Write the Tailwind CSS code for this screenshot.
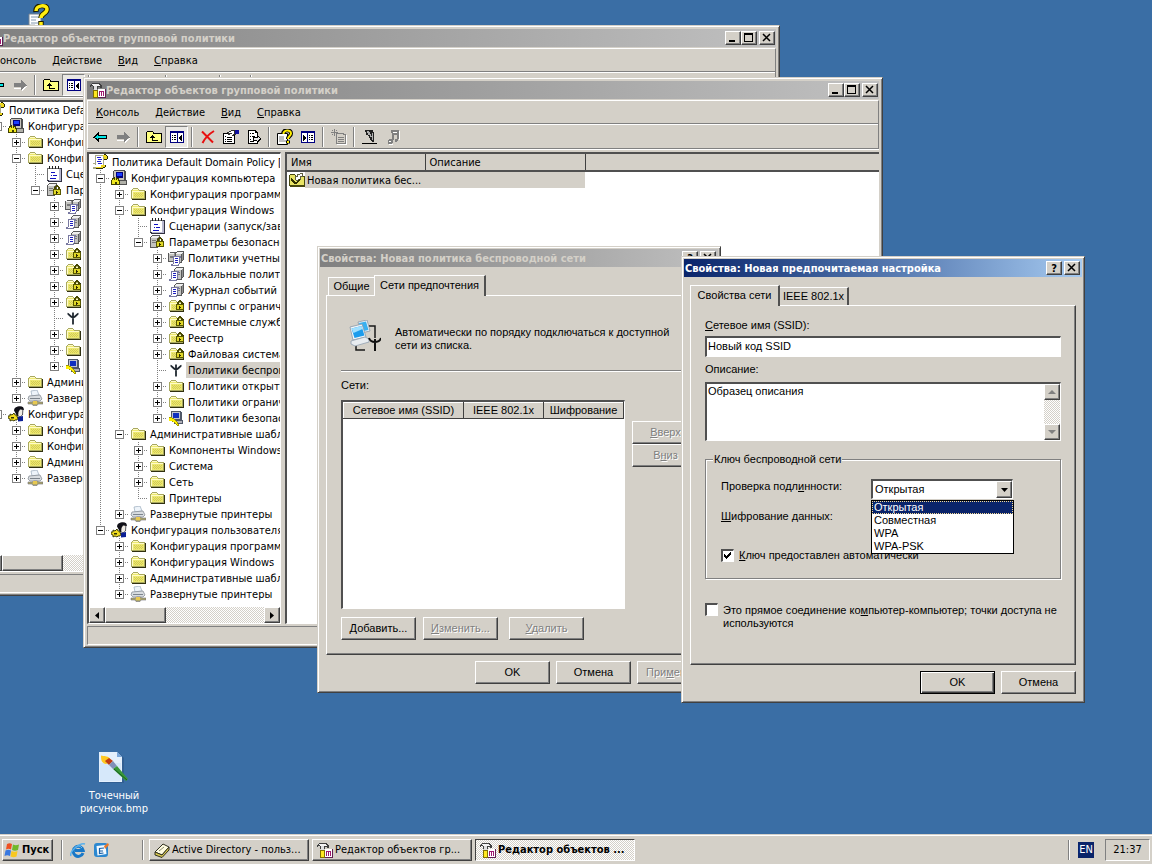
<!DOCTYPE html>
<html lang="ru">
<head>
    <meta charset="utf-8" />
    <meta name="viewport" content="width=device-width, initial-scale=1" />
    <title>Редактор объектов групповой политики</title>
    <script src="https://cdn.jsdelivr.net/npm/@tailwindcss/browser@4"></script>
</head>
<body class="h-screen flex flex-col overflow-hidden bg-[#3a6ea5] text-black text-[11px] leading-[13px] font-['DejaVu_Sans_Condensed','DejaVu_Sans',sans-serif] cursor-default select-none">

    <!-- Иконки -->
    <svg class="hidden" xmlns="http://www.w3.org/2000/svg">
        <symbol id="folder" viewBox="0 0 16 16" shape-rendering="crispEdges">
            <path d="M2 13h13V5h1v9H2z" fill="#303010" />
            <path d="M1 4h1V3h1V2h5v1h1v1h6v9H1z" fill="#a8a860" />
            <path d="M2 4h1V3h5v1h1v1h5v7H2z" fill="#ece870" />
            <path d="M2 5h12v1H3v6H2zM3 3h5v1H3z" fill="#fffbc8" />
            <path d="M4 7h1v1H4zM6 7h1v1H6zM8 7h1v1H8zM10 7h1v1h-1zM12 7h1v1h-1zM5 8h1v1H5zM7 8h1v1H7zM9 8h1v1H9zM11 8h1v1h-1zM4 9h1v1H4zM6 9h1v1H6zM8 9h1v1H8zM10 9h1v1h-1zM12 9h1v1h-1zM5 10h1v1H5zM7 10h1v1H7zM9 10h1v1H9zM11 10h1v1h-1z" fill="#d4cc54" />
        </symbol>
        <symbol id="padlock" viewBox="0 0 8 10" shape-rendering="crispEdges">
            <path d="M1 5V2h1V1h1V0h2v1h1v1h1v3H5V2H3v3z" fill="#484800" />
            <path d="M0 4h8v6H0z" fill="#585800" />
            <path d="M1 5h6v4H1z" fill="#e0d828" />
            <path d="M3 6h1v1h1v1H4v1H3z" fill="#302800" />
        </symbol>
        <symbol id="folderlock" viewBox="0 0 16 16">
            <use href="#folder" width="16" height="16" />
            <use href="#padlock" x="8" y="2" width="8" height="10" />
        </symbol>
        <symbol id="computer" viewBox="0 0 16 16" shape-rendering="crispEdges">
            <path d="M3 0h11v1h1v9h1v5H6v-3H2V1h1z" fill="#505050" />
            <path d="M3 1h10v9H3z" fill="#c8c4bc" />
            <path d="M5 2h7v6H5z" fill="#000080" />
            <path d="M6 3h5v3H6z" fill="#1a3cff" />
            <path d="M9 11h6v3H9z" fill="#b0b0a8" />
            <path d="M0 10h1V8h2V7h1v1h1V7h1v1h2v2h1v5H0z" fill="#404000" />
            <path d="M1 10h1V9h1v1h1V8h1v2h1V9h1v2h1v3H6v-2H4v2H1z" fill="#f0e820" />
        </symbol>
        <symbol id="user" viewBox="0 0 16 16">
            <path d="M8 3C9 0 14 0 15 2L14.500 9L12 11L9 9z" fill="#f0ece4" stroke="#303038" stroke-width=".8" />
            <path d="M6 4.500C6 1 10-.500 15 1L16 4L12 3.500L10.500 6L10 11L8 8z" fill="#101018" />
            <path d="M10 11l5-1v5l-5 .5z" fill="#0a1e96" />
            <path d="M0 10l2 0l0-2l2 1l2-2l1 2l2 0l0 2l1 1l-1 2l-2 0l-1 1l-2-1l-2 1l0-2l-2-1z" fill="#f0dc20" stroke="#303000" stroke-width=".9" />
            <path d="M3 11h3v1.500H3z" fill="#303000" />
        </symbol>
        <symbol id="scroll" viewBox="0 0 16 16" shape-rendering="crispEdges">
            <path d="M3 1h10v2h-1v9h1v2h-3v1H1v-2h2v-3H1V9h2z" fill="#a8a888" />
            <path d="M4 2h7v9h1v2H3v-2h1z" fill="#fff" />
            <path d="M5 3h4v1H5zM6 5h4v1H6zM5 7h4v1H5zM6 9h4v1H6z" fill="#2020d0" />
            <path d="M11 1h3v1h1v3h-3V3h-1zM9 11h4v2h-2v1H4v-1h5z" fill="#f0d820" />
            <path d="M12 0h2v1h1v1h1v3h-1v1h-3V5h3V2h-1V1h-2zM13 11h1v2h-1v1h-2v1H4v-1h7v-1h2z" fill="#282800" />
        </symbol>
        <symbol id="notes" viewBox="0 0 16 16" shape-rendering="crispEdges">
            <path d="M1 2h15v14H2v-1H1z" fill="#303040" />
            <path d="M2 3h11v11H2z" fill="#fff" />
            <path d="M1 2h13v1H1zM1 2h1v12H1z" fill="#707070" />
            <path d="M3 0h1v3H3zM6 0h1v3H6zM9 0h1v3H9zM12 0h1v3h-1z" fill="#202020" />
            <path d="M5 6h4v1H5zM5 9h1v1H5zM7 9h4v1H7zM4 12h6v1H4z" fill="#1010c0" />
            <path d="M13 3h2v12H3v-1h10z" fill="#b8b8d0" />
        </symbol>
        <symbol id="tower" viewBox="0 0 10 14" shape-rendering="crispEdges">
            <path d="M0 3h1V2h1V1h8v10H9v1H8v2H0z" fill="#585858" />
            <path d="M1 3h1V2h7v1H8v1H1z" fill="#f0f0f0" />
            <path d="M1 4h6v9H1z" fill="#c4c4c0" />
            <path d="M8 3h1v8H8z" fill="#909090" />
            <path d="M2 6h4v1H2zM2 8h4v1H2z" fill="#787878" />
        </symbol>
        <symbol id="serverlock" viewBox="0 0 16 16">
            <use href="#tower" x="1" y="0" width="10" height="14" />
            <use href="#padlock" x="7" y="3" width="8" height="10" />
        </symbol>
        <symbol id="sheet" viewBox="0 0 10 10" shape-rendering="crispEdges">
            <path d="M2 0h8v2H9v6H8v2H0V8h2z" fill="#7878a0" />
            <path d="M3 1h5v7H7v1H2V8h1z" fill="#fff" />
            <path d="M4 2h3v1H4zM4 4h3v1H4zM4 6h3v1H4z" fill="#2020c0" />
        </symbol>
        <symbol id="servers" viewBox="0 0 16 16">
            <use href="#tower" x="0" y="1" width="8" height="11" />
            <use href="#tower" x="7" y="0" width="9" height="13" />
            <use href="#sheet" x="3" y="6" width="10" height="10" />
        </symbol>
        <symbol id="serverdoc" viewBox="0 0 16 16">
            <use href="#tower" x="6" y="0" width="10" height="14" />
            <use href="#sheet" x="1" y="5" width="10" height="10" />
        </symbol>
        <symbol id="antenna" viewBox="0 0 16 16">
            <path d="M8 2.500v12M2.500 3.500C4 4 5 7 8 7.500C11 7 12 4 13.500 3.500" fill="none" stroke="#202830" stroke-width="1.800" />
        </symbol>
        <symbol id="secpc" viewBox="0 0 16 16" shape-rendering="crispEdges">
            <path d="M3 1h10v1h1v8h1v4h-9v-3H3z" fill="#505868" />
            <path d="M4 2h8v7H4z" fill="#c0c4d0" />
            <path d="M5 3h6v5H5z" fill="#1030c0" />
            <path d="M8 11h6v2H8z" fill="#b0b0b8" />
            <path d="M1 7h3v1h2v1h1v1h1v1h1v1h1v2h1v2H9v-1H8v-1H7v-1H6v-1H4v-1H1z" fill="#a09800" />
            <path d="M1 8h3v1h2v1h1v1h1v1h1v2h1v1H9v-1H8v-1H7v-1H5v-1H1z" fill="#fff000" />
        </symbol>
        <symbol id="printer" viewBox="0 0 16 16">
            <path d="M4 1l6 -1l2 5l-7 1z" fill="#eef4fa" stroke="#9ab" stroke-width=".7" />
            <path d="M2 6l11-1l2 4l-2 2H3L1 9z" fill="#d8dce0" stroke="#8a9098" stroke-width=".8" />
            <path d="M3 8h10v1H3z" fill="#7c848c" />
            <path d="M1 12h4l2-1h3l2 1h4v2h-5l-1 1.500H6L5 14H1z" fill="#b0a868" stroke="#70707a" stroke-width=".6" />
            <path d="M6 11h4v3H6z" fill="#e8c850" />
        </symbol>
        <symbol id="mmc" viewBox="0 0 16 16" shape-rendering="crispEdges">
            <path d="M0 3h1V2h1V1h8v1h1v1h1v3h-2V5H8v2H3V4H1v1H0z" fill="#404040" />
            <path d="M2 2h7v1h1v1H3V3H2z" fill="#f4f4f4" />
            <path d="M4 4h3v5H4z" fill="#e0e0e0" />
            <path d="M3 8h5v8H3z" fill="#807000" />
            <path d="M4 9h3v6H4z" fill="#ffe820" />
            <path d="M8 7h8v9H8z" fill="#602050" />
            <path d="M8 7h7v8H8z" fill="#fff" />
            <path d="M9 9h5v1H9zM9 10h1v4H9zM11 10h1v4h-1zM13 10h1v4h-1z" fill="#a01870" />
        </symbol>
        <symbol id="back" viewBox="0 0 16 16" shape-rendering="crispEdges">
            <path d="M1 8h1V7h1V6h1V5h1V4h1V3h1v3h8v4H7v3H6v-1H5v-1H4v-1H3V9H1z" fill="#000" />
            <path d="M3 8h1V7h1V6h1v1h8v2H6v1H5V9H3z" fill="#00e8e8" />
        </symbol>
        <symbol id="forward" viewBox="0 0 16 16" shape-rendering="crispEdges">
            <path d="M16 9h-1v1h-1v1h-1v1h-1v1h-1v1h-1v-2H2v-1h9v-1h3V9z" fill="#fff" />
            <path d="M15 8h-1V7h-1V6h-1V5h-1V4h-1V3H9v3H2v4h7v3h1v-1h1v-1h1v-1h1V9h2z" fill="#808080" />
        </symbol>
        <symbol id="up" viewBox="0 0 16 16" shape-rendering="crispEdges">
            <path d="M0 3h1V2h6v1h1v1h8v10H0z" fill="#000" />
            <path d="M1 3h6v2h8v8H1z" fill="#ffff80" />
            <path d="M6 6h1v1h1v1h1v1H7v2h5v1H6V9H4V8h1V7h1z" fill="#000" />
        </symbol>
        <symbol id="treepane" viewBox="0 0 16 16" shape-rendering="crispEdges">
            <path d="M1 2h14v12H1z" fill="#000080" />
            <path d="M2 4h6v9H2zM9 4h5v9H9z" fill="#fff" />
            <path d="M3 6h1v1H3zM5 6h2v1H5zM3 8h1v1H3zM5 8h2v1H5zM3 10h1v1H3zM5 10h2v1H5z" fill="#000" />
            <path d="M10 8h1V7h1V6h1v6h-1v-1h-1v-1h-1z" fill="#000" />
        </symbol>
        <symbol id="rightpane" viewBox="0 0 16 16" shape-rendering="crispEdges">
            <path d="M1 2h14v12H1z" fill="#000080" />
            <path d="M2 4h5v9H2zM8 4h6v9H8z" fill="#fff" />
            <path d="M3 6h1v1h1v1h1v2H5v1H4v1H3z" fill="#000" />
            <path d="M9 6h1v1H9zM11 6h2v1h-2zM9 8h1v1H9zM11 8h2v1h-2zM9 10h1v1H9zM11 10h2v1h-2z" fill="#000" />
        </symbol>
        <symbol id="delete" viewBox="0 0 16 16">
            <path d="M2 2.500L13 13.500M14 2C9 5 5 9 2.500 14" fill="none" stroke="#e81010" stroke-width="2" />
        </symbol>
        <symbol id="props" viewBox="0 0 16 16" shape-rendering="crispEdges">
            <path d="M0 4h12v11H0z" fill="#000" />
            <path d="M1 5h10v9H1z" fill="#fff" />
            <path d="M2 7h1v1H2zM4 8h5v1H4zM2 10h1v1H2zM4 10h5v1H4zM2 12h1v1H2zM4 12h5v1H4z" fill="#000" />
            <path d="M4 3h2V2h2V1h4v1h1v4h-2v1H9V5H7v1H5V4H4z" fill="#303030" />
            <path d="M6 3h2V2h3v3h-1v1H9V4H6z" fill="#fff" />
            <path d="M12 1h4v4h-4z" fill="#1010a0" />
        </symbol>
        <symbol id="export" viewBox="0 0 16 16" shape-rendering="crispEdges">
            <path d="M2 1h8v1h1v1h1v12H2z" fill="#000" />
            <path d="M3 2h6v2h2v10H3z" fill="#fff" />
            <path d="M4 4h1v1H4zM6 4h2v1H6zM4 7h1v1H4zM6 7h3v1H6zM4 10h1v1H4zM4 12h4v1H4z" fill="#000" />
            <path d="M7 8h4V6h1v1h1v1h1v1h1v2h-1v1h-1v1h-1v1h-1v-2H7z" fill="#000" />
            <path d="M8 9h4V8h1v1h1v1h-1v1h-1v1h-1v-1H8z" fill="#e8e8e8" />
        </symbol>
        <symbol id="help" viewBox="0 0 16 16">
            <path d="M.500 4.500h10v11h-10z" fill="#fff" stroke="#000" />
            <path d="M2 8h5M2 10h5M2 12h7" stroke="#808080" />
            <path d="M6 5C6 0 14 0 14 4.500C14 7 11 7 11 10M11 11.500v3" fill="none" stroke="#000" stroke-width="4" />
            <path d="M6.500 5C6 1 14 0 14 4.500C14 7 11 7 11 10M11 12v2" fill="none" stroke="#ffee00" stroke-width="2" />
        </symbol>
        <symbol id="new" viewBox="0 0 16 16" shape-rendering="crispEdges">
            <path d="M5 4h8v1h2v10H5zM6 5v9h8V6h-2V5z" fill="#808080" fill-rule="evenodd" />
            <path d="M7 8h6v1H7zM7 10h6v1H7zM7 12h6v1H7zM3 0h1v7H3zM0 3h7v1H0zM1 1h1v1H1zM5 1h1v1H5zM1 5h1v1H1zM5 5h1v1H5z" fill="#808080" />
            <path d="M15 6h1v10H6v-1h9z" fill="#fff" />
        </symbol>
        <symbol id="activate" viewBox="0 0 16 16" shape-rendering="crispEdges">
            <path d="M3 1h8v2h1v10h-2v-1H9v-1H8V9H7V7H6V6H4V3H3z" fill="#202020" />
            <path d="M5 2h2v1h1v2h1v2h1v1H8V6H6V4H5zM10 4h1v7h-1z" fill="#b0b0b0" />
            <path d="M0 14h15v1H0z" fill="#000" />
        </symbol>
        <symbol id="note" viewBox="0 0 16 16" shape-rendering="crispEdges">
            <path d="M6 1h8v9h-1v2h-1v1h-2v-3h2V6H9v5H8v3H7v1H3v-4h1v-1h3V4H6z" fill="#808080" />
            <path d="M8 3h4v1H8zM4 12h2v1H4zM14 2h1v9h-1zM4 15h4v1H4z" fill="#fff" />
        </symbol>
        <symbol id="policyfolder" viewBox="0 0 16 16" shape-rendering="crispEdges">
            <path d="M0 3h1V2h5v1h1v1h9v11H1v-1H0z" fill="#484810" />
            <path d="M1 3h5v2h9v8H1z" fill="#e8e464" />
            <path d="M6 4h2V2h3V1h3v4h-2v3h-2v1H7V8H6z" fill="#606040" />
            <path d="M7 5h2V3h2V2h2v2h-2v3H9v1H7z" fill="#fff" />
            <path d="M2 6h1v1h1v1h1v1h1v1h2V9h1V8h1V7h1v2h-1v1H9v1H8v1H5v-1H4v-1H3V9H2z" fill="#303000" />
        </symbol>
        <symbol id="network" viewBox="0 0 32 32">
            <path d="M20 6h6v12M7 26v4h9" fill="none" stroke="#181818" stroke-width="1.500" />
            <path d="M9 2l9-2l3 11l-9 2z" fill="#f0f4f8" stroke="#8898a8" stroke-width=".8" />
            <path d="M10 3l7-1.500l2.500 8.500l-7 1.500z" fill="#38b0f0" />
            <path d="M1 7l12-3l4 13l-13 3z" fill="#f4f6f8" stroke="#8898a8" stroke-width=".8" />
            <path d="M2.500 8.500l10-2.500l3 9.500l-10 2.500z" fill="#1c9cec" />
            <path d="M2.500 8.500l10-2.500l1 3l-9 4z" fill="#a0e0ff" />
            <path d="M2 21l14-4l4 2v3l-14 4l-4-2z" fill="#e8ecf0" stroke="#90a0b0" stroke-width=".8" />
            <path d="M26 19v12M20 18c1 3 4 4 6 4s5-1 6-4" fill="none" stroke="#101010" stroke-width="2" />
        </symbol>
        <symbol id="bmp" viewBox="0 0 32 32">
            <path d="M2 2h19l5 5v25H2z" fill="#2a5080" opacity=".5" />
            <path d="M1 1h18l5 5v25H1z" fill="#e4f0fc" />
            <path d="M2 12h21v18H2z" fill="#c8e0f8" opacity=".5" />
            <path d="M19 1v5h5z" fill="#7aa8dc" />
            <path d="M3 5c0 5 1 7 5 8l5-2c0-4-3-6-8-6c-1 0-1-1-2 0z" fill="#ffc820" />
            <path d="M7 10l4-3l4 3l-4 4z" fill="#c03c14" />
            <path d="M11 14l4-4l4 5l-4 3z" fill="#8090b8" />
            <path d="M15 18l4-3l11 13l-2 2z" fill="#389838" />
            <path d="M16 18l13 11" stroke="#186020" fill="none" />
        </symbol>
        <symbol id="winflag" viewBox="0 0 16 16">
            <path d="M3 2c2-1 3-1 5 0L7 7.500C5 6.500 4 6.500 2 7.500z" fill="#f05020" />
            <path d="M9 2.500c2 1 3.500 1 6 0L14 8c-2 1-4 1-6 0z" fill="#70b828" />
            <path d="M1.500 8.500c2-1 3.500-1 5.500 0L6 14c-2-1-3.500-1-5.500 0z" fill="#3878e0" />
            <path d="M7.500 9c2 1 4 1 6 0L12.500 14.500c-2 1-4 1-6 0z" fill="#f8c820" />
        </symbol>
        <symbol id="ie" viewBox="0 0 16 16">
            <path d="M13 11A5 5 0 1 1 13.200 8.500H5" fill="none" stroke="#1878c8" stroke-width="3" />
            <path d="M4.500 6A4.500 4.500 0 0 1 12 6" fill="none" stroke="#70c0f4" stroke-width="1" />
            <path d="M1 14C-1 10 10 0 15 2" fill="none" stroke="#58b0ec" stroke-width="1.500" />
        </symbol>
        <symbol id="showdesk" viewBox="0 0 16 16">
            <rect x="1" y="1" width="14" height="14" rx="3" fill="#2c88d0" />
            <path d="M3.500 4l9-1l1 9l-9 1.500z" fill="#f4faff" />
            <path d="M11 6L6.500 6.500v5l4-.5M6 9h4" stroke="#1860a8" stroke-width="1.200" fill="none" />
            <path d="M11 4l4-3l1 2l-4 4z" fill="#e8782c" />
        </symbol>
        <symbol id="adbook" viewBox="0 0 16 16">
            <path d="M1 10L9 2l6 3l-7 8z" fill="#fffce0" stroke="#303020" />
            <path d="M1 10v3l7 2.500L15 8V5L8 13z" fill="#d8c850" stroke="#303020" />
            <path d="M5 9l5-4" stroke="#8c8c70" />
        </symbol>
        <symbol id="shortcut" viewBox="0 0 32 24">
            <path d="M9 10h12v14H9z" fill="#fff" stroke="#708090" />
            <path d="M3 21h12v3H3z" fill="#fff" stroke="#708090" stroke-width=".6" />
            <path d="M11 13h7M11 16h5M11 19h7" stroke="#8098b0" />
            <path d="M16 8C15 0 27 0 27 5C27 10 21 9 21 14M21 17v5" fill="none" stroke="#202000" stroke-width="5.500" />
            <path d="M16 7C16 1 27 0 27 5C27 10 21 9 21 14M21 18v4" fill="none" stroke="#ffee10" stroke-width="3.500" />
        </symbol>
    </svg>

    <!-- Окно консоли -->
    <template id="consoleWindow">
        <header class="flex items-center h-[18px] pl-[3px] bg-linear-to-r from-[#808080] to-[#c0c0c0] text-[#d4d0c8] font-bold">
            <svg class="size-4 shrink-0"><use href="#mmc" /></svg>
            <h2 class="grow whitespace-nowrap">Редактор объектов групповой политики</h2>
            <button aria-label="Свернуть" class="flex items-center justify-center w-4 h-3.5 bg-[#d4d0c8] border border-t-white border-l-white border-r-[#404040] border-b-[#404040] shadow-[inset_-1px_-1px_0_#808080]"><svg class="size-2.5"><path d="M1 7h6v2H1z" /></svg></button>
            <button aria-label="Развернуть" class="flex items-center justify-center w-4 h-3.5 bg-[#d4d0c8] border border-t-white border-l-white border-r-[#404040] border-b-[#404040] shadow-[inset_-1px_-1px_0_#808080]"><svg class="size-2.5"><path d="M0 0h9v9H0zM1 2v6h7V2z" fill-rule="evenodd" /></svg></button>
            <button aria-label="Закрыть" class="flex items-center justify-center w-4 h-3.5 ml-0.5 mr-px bg-[#d4d0c8] border border-t-white border-l-white border-r-[#404040] border-b-[#404040] shadow-[inset_-1px_-1px_0_#808080]"><svg class="size-2.5"><path d="M1 1l7 7M8 1l-7 7" stroke="#000" stroke-width="1.500" /></svg></button>
        </header>
        <div class="mt-px border border-[#808080] border-l-white border-t-white shadow-[0_1px_0_#fff]">
            <nav class="flex h-[23px] pt-px border-b border-[#808080]">
                <button class="px-2"><u>К</u>онсоль</button>
                <button class="px-2"><u>Д</u>ействие</button>
                <button class="px-2"><u>В</u>ид</button>
                <button class="px-2"><u>С</u>правка</button>
            </nav>
            <div class="toolbar flex items-center h-6 border-t border-white"></div>
        </div>
        <div class="flex grow min-h-0 mt-[3px] gap-1">
            <div class="flex flex-col w-[194px] shrink-0 overflow-hidden bg-white border-t-2 border-l-2 border-r border-b border-t-[#505050] border-l-[#505050] border-r-white border-b-white">
                <ul class="tree grow pl-0.5 overflow-hidden"></ul>
                <div class="flex h-4 shrink-0 bg-[repeating-conic-gradient(#fff_0_25%,#d4d0c8_0_50%)] bg-[length:2px_2px]">
                    <button aria-label="Влево" class="flex items-center justify-center w-4 bg-[#d4d0c8] border border-t-white border-l-white border-r-[#404040] border-b-[#404040] shadow-[inset_-1px_-1px_0_#808080]"><svg class="w-1 h-[7px]"><path d="M4 0v7L0 3.500z" /></svg></button>
                    <div class="w-[61px] bg-[#d4d0c8] border border-t-white border-l-white border-r-[#404040] border-b-[#404040] shadow-[inset_-1px_-1px_0_#808080]"></div>
                    <button aria-label="Вправо" class="flex items-center justify-center w-4 ml-auto bg-[#d4d0c8] border border-t-white border-l-white border-r-[#404040] border-b-[#404040] shadow-[inset_-1px_-1px_0_#808080]"><svg class="w-1 h-[7px]"><path d="M0 0v7L4 3.500z" /></svg></button>
                </div>
            </div>
            <div class="grow overflow-hidden bg-white border-t-2 border-l-2 border-b border-t-[#505050] border-l-[#505050] border-b-white">
                <table class="w-full table-fixed text-left">
                    <thead class="bg-[#d4d0c8]">
                        <tr class="h-[17px] border-b-2 border-[#505050]">
                            <th class="w-[138px] pl-1 font-normal border-r border-[#404040]">Имя</th>
                            <th class="w-[160px] pl-1 font-normal border-r border-[#404040]">Описание</th>
                            <th></th>
                        </tr>
                    </thead>
                    <tbody>
                        <tr>
                            <td class="p-0" colspan="2">
                                <div class="flex items-center h-4 pl-0.5">
                                    <svg class="size-4 shrink-0"><use href="#policyfolder" /></svg>
                                    <span class="grow h-4 pl-0.5 leading-[17px] bg-[#d4d0c8]">Новая политика бес...</span>
                                </div>
                            </td>
                            <td></td>
                        </tr>
                    </tbody>
                </table>
            </div>
        </div>
        <footer class="h-[19px] mt-0.5 border border-t-[#808080] border-l-[#808080] border-r-white border-b-white"></footer>
    </template>

    <main class="relative grow min-h-0">
        <svg class="absolute left-5 top-1 w-8 h-6"><use href="#shortcut" /></svg>

        <a href="#" class="absolute left-[76px] top-[751px] w-[76px] flex flex-col items-center text-white text-center">
            <svg class="size-8"><use href="#bmp" /></svg>
            <span class="mt-1.5">Точечный рисунок.bmp</span>
        </a>

        <section data-console="back" class="absolute -left-5 top-[25px] flex flex-col w-[800px] h-[571px] p-[3px] pb-0.5 bg-[#d4d0c8] border border-t-[#d4d0c8] border-l-[#d4d0c8] border-r-[#404040] border-b-[#404040] shadow-[inset_1px_1px_0_#fff,inset_-1px_-1px_0_#808080]"></section>
        <section data-console="front" class="absolute left-[83px] top-[77px] flex flex-col w-[800px] h-[571px] p-[3px] pb-0.5 bg-[#d4d0c8] border border-t-[#d4d0c8] border-l-[#d4d0c8] border-r-[#404040] border-b-[#404040] shadow-[inset_1px_1px_0_#fff,inset_-1px_-1px_0_#808080]"></section>

        <!-- Свойства политики -->
        <section class="absolute left-[317px] top-[246px] w-[404px] p-0.5 bg-[#d4d0c8] border border-t-[#d4d0c8] border-l-[#d4d0c8] border-r-[#404040] border-b-[#404040] shadow-[inset_1px_1px_0_#fff,inset_-1px_-1px_0_#808080] font-['Liberation_Sans',sans-serif]">
            <header class="flex items-center h-[18px] pl-px bg-linear-to-r from-[#808080] to-[#c0c0c0] text-[#d4d0c8] font-bold font-['DejaVu_Sans_Condensed','DejaVu_Sans',sans-serif]">
                <h2 class="grow whitespace-nowrap">Свойства: Новая политика беспроводной сети</h2>
                <button class="flex items-center justify-center w-4 h-3.5 text-black font-bold bg-[#d4d0c8] border border-t-white border-l-white border-r-[#404040] border-b-[#404040] shadow-[inset_-1px_-1px_0_#808080]">?</button>
                <button aria-label="Закрыть" class="flex items-center justify-center w-4 h-3.5 mx-0.5 bg-[#d4d0c8] border border-t-white border-l-white border-r-[#404040] border-b-[#404040] shadow-[inset_-1px_-1px_0_#808080]"><svg class="size-2.5"><path d="M1 1l7 7M8 1l-7 7" stroke="#000" stroke-width="1.500" /></svg></button>
            </header>
            <div class="p-1.5 pt-2">
                <div role="tablist" class="flex items-end h-5 pl-0.5">
                    <button role="tab" class="w-[46px] h-[18px] border-t border-l border-white">Общие</button>
                    <button role="tab" aria-selected="true" class="relative z-10 w-[112px] h-[21px] -mb-px pb-0.5 bg-[#d4d0c8] border-t border-l border-t-white border-l-white border-r-2 border-r-[#505050]">Сети предпочтения</button>
                </div>
                <div class="h-[360px] pt-6 px-3.5 border border-t-white border-l-white border-r-[#404040] border-b-[#404040] shadow-[inset_-1px_-1px_0_#808080]">
                    <div class="flex items-end pl-2 gap-3.5">
                        <svg class="size-8 shrink-0"><use href="#network" /></svg>
                        <p class="max-w-[284px]">Автоматически по порядку подключаться к доступной сети из списка.</p>
                    </div>
                    <hr class="mt-[18px] h-0.5 border-t border-b border-t-[#808080] border-b-white" />
                    <p class="mt-[7px]">Сети:</p>
                    <div class="flex mt-2 gap-[7px]">
                        <div class="w-[284px] h-[209px] shrink-0 bg-white border-t-2 border-l-2 border-r border-b border-t-[#505050] border-l-[#505050] border-r-white border-b-white">
                            <table class="table-fixed w-[280px]">
                                <thead>
                                    <tr class="h-4">
                                        <th class="w-[120px] p-0 font-normal bg-[#d4d0c8] border border-t-white border-l-white border-r-[#404040] border-b-[#404040]">Сетевое имя (SSID)</th>
                                        <th class="w-20 p-0 font-normal bg-[#d4d0c8] border border-t-white border-l-white border-r-[#404040] border-b-[#404040]">IEEE 802.1x</th>
                                        <th class="w-20 p-0 font-normal bg-[#d4d0c8] border border-t-white border-l-white border-r-[#404040] border-b-[#404040]">Шифрование</th>
                                    </tr>
                                </thead>
                            </table>
                        </div>
                        <div class="flex flex-col pt-[21px]">
                            <button disabled class="w-[67px] h-[23px] shrink-0 border border-t-white border-l-white border-r-[#404040] border-b-[#404040] shadow-[inset_-1px_-1px_0_#808080] text-[#808080] text-shadow-[1px_1px_0_#fff]"><u>В</u>верх</button>
                            <button disabled class="w-[67px] h-[23px] shrink-0 border border-t-white border-l-white border-r-[#404040] border-b-[#404040] shadow-[inset_-1px_-1px_0_#808080] text-[#808080] text-shadow-[1px_1px_0_#fff]">В<u>н</u>из</button>
                        </div>
                    </div>
                    <div class="flex mt-2">
                        <button class="w-[75px] h-[23px] border border-t-white border-l-white border-r-[#404040] border-b-[#404040] shadow-[inset_-1px_-1px_0_#808080]"><u>Д</u>обавить...</button>
                        <button disabled class="w-[75px] h-[23px] ml-[7px] border border-t-white border-l-white border-r-[#404040] border-b-[#404040] shadow-[inset_-1px_-1px_0_#808080] text-[#808080] text-shadow-[1px_1px_0_#fff]"><u>И</u>зменить...</button>
                        <button disabled class="w-[75px] h-[23px] ml-[11px] border border-t-white border-l-white border-r-[#404040] border-b-[#404040] shadow-[inset_-1px_-1px_0_#808080] text-[#808080] text-shadow-[1px_1px_0_#fff]"><u>У</u>далить</button>
                    </div>
                </div>
                <div class="flex justify-end mt-1.5 gap-1.5">
                    <button class="w-[75px] h-[23px] border border-t-white border-l-white border-r-[#404040] border-b-[#404040] shadow-[inset_-1px_-1px_0_#808080]">OK</button>
                    <button class="w-[75px] h-[23px] border border-t-white border-l-white border-r-[#404040] border-b-[#404040] shadow-[inset_-1px_-1px_0_#808080]">Отмена</button>
                    <button disabled class="w-[75px] h-[23px] border border-t-white border-l-white border-r-[#404040] border-b-[#404040] shadow-[inset_-1px_-1px_0_#808080] text-[#808080] text-shadow-[1px_1px_0_#fff]">При<u>м</u>енить</button>
                </div>
            </div>
        </section>

        <!-- Свойства сети -->
        <section class="absolute left-[681px] top-[256px] w-[404px] p-0.5 bg-[#d4d0c8] border border-t-[#d4d0c8] border-l-[#d4d0c8] border-r-[#404040] border-b-[#404040] shadow-[inset_1px_1px_0_#fff,inset_-1px_-1px_0_#808080] font-['Liberation_Sans',sans-serif]">
            <header class="flex items-center h-[18px] pl-px bg-linear-to-r from-[#0a246a] to-[#a6caf0] text-white font-bold font-['DejaVu_Sans_Condensed','DejaVu_Sans',sans-serif]">
                <h2 class="grow whitespace-nowrap">Свойства: Новая предпочитаемая настройка</h2>
                <button class="flex items-center justify-center w-4 h-3.5 text-black font-bold bg-[#d4d0c8] border border-t-white border-l-white border-r-[#404040] border-b-[#404040] shadow-[inset_-1px_-1px_0_#808080]">?</button>
                <button aria-label="Закрыть" class="flex items-center justify-center w-4 h-3.5 mx-0.5 bg-[#d4d0c8] border border-t-white border-l-white border-r-[#404040] border-b-[#404040] shadow-[inset_-1px_-1px_0_#808080]"><svg class="size-2.5"><path d="M1 1l7 7M8 1l-7 7" stroke="#000" stroke-width="1.500" /></svg></button>
            </header>
            <div class="p-1.5 pt-2">
                <div role="tablist" class="flex items-end h-5">
                    <button role="tab" aria-selected="true" class="relative z-10 w-[90px] h-[21px] -mb-px pb-0.5 bg-[#d4d0c8] border-t border-l border-t-white border-l-white border-r-2 border-r-[#505050]">Свойства сети</button>
                    <button role="tab" class="w-[69px] h-[18px] border-t border-t-white border-r-2 border-r-[#505050]">IEEE 802.1x</button>
                </div>
                <form class="h-[360px] pt-[13px] px-3.5 border border-t-white border-l-white border-r-[#404040] border-b-[#404040] shadow-[inset_-1px_-1px_0_#808080]">
                    <label for="ssid" class="block"><u>С</u>етевое имя (SSID):</label>
                    <input id="ssid" type="text" value="Новый код SSID" class="block w-full h-[21px] mt-1 px-px pb-0.5 bg-white border-t-2 border-l-2 border-r border-b border-t-[#505050] border-l-[#505050] border-r-white border-b-white" />
                    <label for="about" class="block mt-1.5">Описание:</label>
                    <div class="flex h-[59px] mt-1.5 bg-white border-t-2 border-l-2 border-r border-b border-t-[#505050] border-l-[#505050] border-r-white border-b-white">
                        <textarea id="about" class="grow px-px pt-px resize-none overflow-hidden">Образец описания</textarea>
                        <div class="flex flex-col justify-between w-4 bg-[repeating-conic-gradient(#fff_0_25%,#d4d0c8_0_50%)] bg-[length:2px_2px]">
                            <button type="button" aria-label="Вверх" class="flex items-center justify-center h-4 bg-[#d4d0c8] border border-t-white border-l-white border-r-[#404040] border-b-[#404040] shadow-[inset_-1px_-1px_0_#808080]"><svg class="w-2 h-1" fill="#808080"><path d="M0 4h8L4 0z" /></svg></button>
                            <button type="button" aria-label="Вниз" class="flex items-center justify-center h-4 bg-[#d4d0c8] border border-t-white border-l-white border-r-[#404040] border-b-[#404040] shadow-[inset_-1px_-1px_0_#808080]"><svg class="w-2 h-1" fill="#808080"><path d="M0 0h8L4 4z" /></svg></button>
                        </div>
                    </div>
                    <fieldset class="h-[126px] mt-3 px-[15px] border border-[#808080] shadow-[inset_1px_1px_0_#fff,1px_1px_0_#fff]">
                        <legend class="-ml-2 px-px bg-[#d4d0c8]">Ключ беспроводной сети</legend>
                        <div class="flex items-start pt-[13px]">
                            <label for="auth" class="w-[150px] pt-px">Проверка подл<u>и</u>нности:</label>
                            <div class="relative w-[142px]">
                                <select id="auth" class="block w-full h-5 pl-0.5 appearance-none bg-white border-t-2 border-l-2 border-r border-b border-t-[#505050] border-l-[#505050] border-r-white border-b-white">
                                    <option>Открытая</option>
                                    <option>Совместная</option>
                                    <option>WPA</option>
                                    <option>WPA-PSK</option>
                                </select>
                                <span class="absolute right-px top-0.5 flex items-center justify-center w-4 h-[17px] pointer-events-none bg-[#d4d0c8] border border-t-white border-l-white border-r-[#404040] border-b-[#404040] shadow-[inset_-1px_-1px_0_#808080]"><svg class="w-[7px] h-1"><path d="M0 0h7L3.500 4z" /></svg></span>
                                <ul role="listbox" class="absolute left-0 top-[21px] z-10 w-[143px] bg-white border border-black">
                                    <li role="option" aria-selected="true" class="pl-0.5 bg-[#0a246a] text-white outline outline-dotted -outline-offset-1 outline-[#f5db95]">Открытая</li>
                                    <li role="option" class="pl-0.5">Совместная</li>
                                    <li role="option" class="pl-0.5">WPA</li>
                                    <li role="option" class="pl-0.5">WPA-PSK</li>
                                </ul>
                            </div>
                        </div>
                        <div class="flex items-start mt-2.5">
                            <label for="cipher" class="w-[150px] pt-px"><u>Ш</u>ифрование данных:</label>
                            <select id="cipher" class="block w-[142px] h-5 appearance-none bg-white border border-[#808080]"></select>
                        </div>
                        <div class="flex items-center mt-5 gap-[5px]">
                            <span class="relative size-[13px]">
                                <input id="autokey" type="checkbox" checked class="block size-[13px] appearance-none bg-white border-t-2 border-l-2 border-r border-b border-t-[#505050] border-l-[#505050] border-r-white border-b-white" />
                                <svg class="absolute left-[3px] top-[3px] size-[7px] pointer-events-none" shape-rendering="crispEdges"><path d="M0 2h1v1h1v1h1V3h1V2h1V1h1V0h1v3H6v1H5v1H4v1H3v1H2V6H1V5H0z" /></svg>
                            </span>
                            <label for="autokey"><u>К</u>люч предоставлен автоматически</label>
                        </div>
                    </fieldset>
                    <div class="flex items-start mt-6 gap-[5px]">
                        <input id="adhoc" type="checkbox" class="block size-[13px] shrink-0 appearance-none bg-white border-t-2 border-l-2 border-r border-b border-t-[#505050] border-l-[#505050] border-r-white border-b-white" />
                        <label for="adhoc" class="pt-px">Это прямое соединение ко<u>м</u>пьютер-компьютер; точки доступа не используются</label>
                    </div>
                </form>
                <div class="flex justify-end mt-1.5 gap-1.5">
                    <button class="w-[75px] h-[23px] border border-black shadow-[inset_1px_1px_0_#fff,inset_-1px_-1px_0_#404040,inset_-2px_-2px_0_#808080]">OK</button>
                    <button class="w-[75px] h-[23px] border border-t-white border-l-white border-r-[#404040] border-b-[#404040] shadow-[inset_-1px_-1px_0_#808080]">Отмена</button>
                </div>
            </div>
        </section>
    </main>

    <!-- Панель задач -->
    <footer class="relative flex items-center h-[30px] shrink-0 px-0.5 bg-[#d4d0c8] border-t border-[#d4d0c8] shadow-[inset_0_1px_0_#fff]">
        <button class="flex items-center w-[51px] h-[22px] pl-px gap-0.5 font-bold border border-t-white border-l-white border-r-[#404040] border-b-[#404040] shadow-[inset_-1px_-1px_0_#808080]"><svg class="size-4 shrink-0"><use href="#winflag" /></svg>Пуск</button>
        <span class="w-0.5 h-5 ml-2 border-l border-l-[#808080] border-r border-r-white"></span>
        <a href="#" aria-label="Internet Explorer" class="ml-[7px]"><svg class="size-4"><use href="#ie" /></svg></a>
        <a href="#" aria-label="Свернуть все окна" class="ml-[7px]"><svg class="size-4"><use href="#showdesk" /></svg></a>
        <span class="w-0.5 h-5 ml-[33px] border-l border-l-[#808080] border-r border-r-white"></span>
        <div class="flex grow ml-[5px] gap-[3px]">
            <button class="flex items-center w-40 h-[22px] px-1 gap-0.5 whitespace-nowrap border border-t-white border-l-white border-r-[#404040] border-b-[#404040] shadow-[inset_-1px_-1px_0_#808080]"><svg class="size-4 shrink-0"><use href="#adbook" /></svg>Active Directory - польз...</button>
            <button class="flex items-center w-40 h-[22px] px-1 gap-0.5 whitespace-nowrap border border-t-white border-l-white border-r-[#404040] border-b-[#404040] shadow-[inset_-1px_-1px_0_#808080]"><svg class="size-4 shrink-0"><use href="#mmc" /></svg>Редактор объектов гр...</button>
            <button class="flex items-center w-40 h-[22px] px-1 gap-0.5 whitespace-nowrap font-bold bg-[repeating-conic-gradient(#fff_0_25%,#d4d0c8_0_50%)] bg-[length:2px_2px] border border-t-[#404040] border-l-[#404040] border-r-white border-b-white"><svg class="size-4 shrink-0"><use href="#mmc" /></svg>Редактор объектов ...</button>
        </div>
        <span class="w-0.5 h-5 border-l border-l-[#808080] border-r border-r-white"></span>
        <span class="w-4 h-4 ml-2 leading-4 text-center text-white bg-[#0a246a]">EN</span>
        <time class="w-[45px] h-[22px] ml-[11px] leading-5 text-center border border-t-[#808080] border-l-[#808080] border-r-white border-b-white">21:37</time>
    </footer>

    <script>
        // Первая строка - отступы и узел:
        // "|" линия, " " пусто, "+" и "-" кнопка, "." без кнопки; p, e, l - то же для последнего узла ветки
        const securityRows = [
            ['||.', 'notes', 'Сценарии (запуск/завершение)'],
            ['||e', 'serverlock', 'Параметры безопасности'],
            ['|| +', 'servers', 'Политики учетных записей'],
            ['|| +', 'serverdoc', 'Локальные политики'],
            ['|| +', 'serverdoc', 'Журнал событий'],
            ['|| +', 'folderlock', 'Группы с ограниченным'],
            ['|| +', 'folderlock', 'Системные службы'],
            ['|| +', 'folderlock', 'Реестр'],
            ['|| +', 'folderlock', 'Файловая система'],
            ['|| .', 'antenna', 'Политики беспроводной сети'],
            ['|| +', 'folder', 'Политики открытого ключа'],
            ['|| +', 'folder', 'Политики ограниченного'],
            ['|| p', 'secpc', 'Политики безопасности']
        ];

        const adminRows = [
            ['||+', 'folder', 'Компоненты Windows'],
            ['||+', 'folder', 'Система'],
            ['||+', 'folder', 'Сеть'],
            ['||l', 'folder', 'Принтеры']
        ];

        function buildRows(expanded) {
            return [
                ['', 'scroll', 'Политика Default Domain Policy [a'],
                ['-', 'computer', 'Конфигурация компьютера'],
                ['|+', 'folder', 'Конфигурация программ'],
                ['|-', 'folder', 'Конфигурация Windows'],
                ...securityRows,
                [expanded ? '|-' : '|+', 'folder', 'Административные шаблоны'],
                ...(expanded ? adminRows : []),
                ['|p', 'printer', 'Развернутые принтеры'],
                ['e', 'user', 'Конфигурация пользователя'],
                [' +', 'folder', 'Конфигурация программ'],
                [' +', 'folder', 'Конфигурация Windows'],
                [' +', 'folder', 'Административные шаблоны'],
                [' p', 'printer', 'Развернутые принтеры']
            ];
        }

        function cell(ch) {
            if (ch === ' ') return '<span class="w-[19px] shrink-0"></span>';
            const last = 'pel'.includes(ch);
            const line = `<i class="absolute left-[9px] top-0 w-px ${last ? 'h-2' : 'h-4'} bg-[repeating-linear-gradient(#808080_0_1px,transparent_1px_2px)]"></i>`;
            if (ch === '|') return `<span class="relative w-[19px] shrink-0">${line}</span>`;
            const dash = '<i class="absolute left-[9px] top-2 w-2.5 h-px bg-[repeating-linear-gradient(90deg,#808080_0_1px,transparent_1px_2px)]"></i>';
            let box = '';
            if ('+p'.includes(ch)) box = '<svg class="absolute left-[5px] top-1 size-[9px]" shape-rendering="crispEdges"><path d="M0 0h9v9H0z" fill="#808080"/><path d="M1 1h7v7H1z" fill="#fff"/><path d="M2 4h5v1H2zM4 2h1v5H4z"/></svg>';
            if ('-e'.includes(ch)) box = '<svg class="absolute left-[5px] top-1 size-[9px]" shape-rendering="crispEdges"><path d="M0 0h9v9H0z" fill="#808080"/><path d="M1 1h7v7H1z" fill="#fff"/><path d="M2 4h5v1H2z"/></svg>';
            return `<span class="relative w-[19px] shrink-0">${line}${dash}${box}</span>`;
        }

        function renderTree(rows) {
            return rows.map(([guides, icon, label]) => {
                const selected = icon === 'antenna' ? 'bg-[#d4d0c8]' : '';
                return `<li class="flex h-4 whitespace-nowrap">${[...guides].map(cell).join('')}<svg class="size-4 ml-px mr-0.5 shrink-0"><use href="#${icon}"/></svg><span class="h-4 px-0.5 leading-[18px] ${selected}">${label}</span></li>`;
            }).join('');
        }

        const tools = ['back', 'forward', '|', 'up', 'treepane', '|', 'delete', 'props', 'export', '|', 'help', 'rightpane', '|', 'new', '|', 'activate', 'note'];

        function renderTool(name) {
            if (name === '|') return '<span class="w-0.5 h-5 mx-[3px] border-l border-l-[#808080] border-r border-r-white"></span>';
            const look = name === 'treepane' ? 'border border-t-[#808080] border-l-[#808080] border-r-white border-b-white bg-[#eae8e4]' : '';
            return `<button aria-label="${name}" class="flex items-center justify-center w-[23px] h-[22px] ${look}"><svg class="size-4"><use href="#${name}"/></svg></button>`;
        }

        document.querySelectorAll('[data-console]').forEach((win) => {
            win.append(document.getElementById('consoleWindow').content.cloneNode(true));
            win.querySelector('.toolbar').innerHTML = tools.map(renderTool).join('');
            win.querySelector('.tree').innerHTML = renderTree(buildRows(win.dataset.console === 'front'));
        });
    </script>

</body>
</html>
